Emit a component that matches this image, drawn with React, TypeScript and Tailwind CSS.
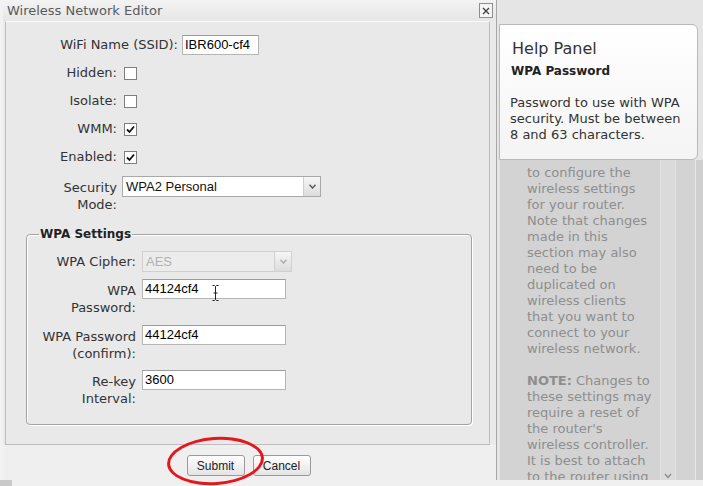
import React from 'react';

const labelFont = "font-['DejaVu_Sans',Verdana,sans-serif]";
const inputFont = "font-['Liberation_Sans',Arial,sans-serif]";

function Checkbox({ checked }: { checked?: boolean }) {
  return (
    <div className="w-[13px] h-[13px] border border-[#7f7f7f] bg-white flex items-center justify-center">
      {checked && (
        <svg width="9" height="9" viewBox="0 0 9 9">
          <path d="M1 4.5 L3.5 7 L8 1.5" fill="none" stroke="#111" strokeWidth="1.8" />
        </svg>
      )}
    </div>
  );
}

function SelectBox({ value, width, disabled }: { value: string; width: string; disabled?: boolean }) {
  return (
    <div
      className={`${width} h-[21px] flex border ${
        disabled ? 'border-[#d0d0d0] bg-[#ececec] text-[#b0b0b0]' : 'border-[#a9a9a9] bg-white text-[#111]'
      }`}
    >
      <div className={`flex-1 pl-[3px] text-[13px] leading-[19px] ${inputFont}`}>{value}</div>
      <div className="w-[17px] border-l border-[#cfcfcf] bg-gradient-to-b from-[#f6f6f6] to-[#dcdcdc] flex items-center justify-center">
        <svg width="7" height="5" viewBox="0 0 7 5">
          <path d="M0.5 0.8 L3.5 4 L6.5 0.8" fill="none" stroke={disabled ? '#aaa' : '#555'} strokeWidth="1.4" />
        </svg>
      </div>
    </div>
  );
}

function TextInput({ value, width, children }: { value: string; width: string; children?: React.ReactNode }) {
  return (
    <div
      className={`${width} h-[20px] relative border border-[#b5b5b5] border-t-[#9c9c9c] bg-white pl-[2px] text-[13px] leading-[18px] text-black ${inputFont}`}
    >
      {value}
      {children}
    </div>
  );
}

function Dialog() {
  return (
    <div className="w-[497px] h-[480px] flex flex-col bg-[#eaeaea] border-r border-[#a7a7a7] border-l-[3px] border-l-[#f2f2f2]">
      {/* title bar */}
      <div className="h-[21px] flex items-center justify-between pl-[4px] pr-[3px] bg-gradient-to-b from-[#f3f3f3] to-[#e6e6e6]">
        <span className={`text-[13px] text-[#5a5a5a] ${labelFont}`}>Wireless Network Editor</span>
        <div className="w-[14px] h-[15px] border border-[#8e8e8e] bg-[#f5f5f5] flex items-center justify-center">
          <svg width="8" height="8" viewBox="0 0 8 8">
            <path d="M1 1 L7 7 M7 1 L1 7" stroke="#444" strokeWidth="1.4" />
          </svg>
        </div>
      </div>

      {/* content panel */}
      <div
        className={`ml-[2px] mr-[6px] h-[424px] border border-[#bdbdbd] border-t-[#fafafa] bg-[#e9e9e9] pt-[9px] text-[13px] text-[#333] ${labelFont}`}
      >
        <div className="h-[28px] flex items-center">
          <div className="w-[172px] text-right">WiFi Name (SSID):</div>
          <div className="ml-[4px]">
            <TextInput value="IBR600-cf4" width="w-[77px]" />
          </div>
        </div>

        {[
          ['Hidden:', false],
          ['Isolate:', false],
          ['WMM:', true],
          ['Enabled:', true],
        ].map(([label, checked]) => (
          <div key={label as string} className="h-[28px] flex items-center">
            <div className="w-[111px] text-right">{label as string}</div>
            <div className="ml-[7px]">
              <Checkbox checked={checked as boolean} />
            </div>
          </div>
        ))}

        <div className="h-[42px] flex items-start pt-[5px]">
          <div className="w-[111px] text-right leading-[17px] pt-[3px]">
            Security
            <br />
            Mode:
          </div>
          <div className="ml-[5px]">
            <SelectBox value="WPA2 Personal" width="w-[199px]" />
          </div>
        </div>

        <fieldset className="ml-[20px] w-[446px] h-[198px] mt-[14px] border border-[#a3a3a3] rounded-[4px] shadow-[inset_1px_1px_0_#ffffff,1px_1px_0_#ffffff] pt-[9px]">
          <legend className="ml-[12px] px-[1px] font-bold text-[12px] leading-[15px] text-[#222]">WPA Settings</legend>

          <div className="h-[28px] flex items-start">
            <div className="w-[109px] text-right leading-[17px] pt-[2px]">WPA Cipher:</div>
            <div className="ml-[6px]">
              <SelectBox value="AES" width="w-[150px]" disabled />
            </div>
          </div>

          <div className="h-[46px] flex items-start">
            <div className="w-[109px] text-right leading-[17px] pt-[3px]">
              WPA
              <br />
              Password:
            </div>
            <div className="ml-[6px]">
              <TextInput value="44124cf4" width="w-[144px]">
                <svg className="absolute left-[69px] top-[5px]" width="7" height="16" viewBox="0 0 7 16">
                  <path d="M0.5 0.5 H2.5 L3.5 1.5 L4.5 0.5 H6.5 M3.5 1.5 V14.5 M0.5 15.5 H2.5 L3.5 14.5 L4.5 15.5 H6.5 M1.5 8 H5.5" fill="none" stroke="#222" strokeWidth="1" />
                </svg>
              </TextInput>
            </div>
          </div>

          <div className="h-[45px] flex items-start">
            <div className="w-[109px] text-right leading-[17px] pt-[3px]">
              WPA Password
              <br />
              (confirm):
            </div>
            <div className="ml-[6px]">
              <TextInput value="44124cf4" width="w-[144px]" />
            </div>
          </div>

          <div className="h-[44px] flex items-start">
            <div className="w-[109px] text-right leading-[17px] pt-[3px]">
              Re-key
              <br />
              Interval:
            </div>
            <div className="ml-[6px]">
              <TextInput value="3600" width="w-[144px]" />
            </div>
          </div>
        </fieldset>
      </div>

      {/* buttons */}
      <div className="relative flex-1 bg-[#efefef] flex justify-center gap-[8px] pt-[10px] pr-[2px]">
        {['Submit', 'Cancel'].map((b) => (
          <button
            key={b}
            className={`w-[58px] h-[21px] border border-[#9a9a9a] rounded-[3px] bg-gradient-to-b from-[#ffffff] to-[#e4e4e4] text-[12px] text-[#222] ${inputFont}`}
          >
            {b}
          </button>
        ))}
        <div className="absolute left-[164px] top-[-8px] w-[97px] h-[48px] rounded-[50%] border-[3px] border-[#e5171c] rotate-[-4deg]" />
      </div>
    </div>
  );
}

const helpLines = [
  'to configure the',
  'wireless settings',
  'for your router.',
  'Note that changes',
  'made in this',
  'section may also',
  'need to be',
  'duplicated on',
  'wireless clients',
  'that you want to',
  'connect to your',
  'wireless network.',
];

const noteLines = [
  'these settings may',
  'require a reset of',
  "the router's",
  'wireless controller.',
  'It is best to attach',
  'to the router using',
];

function HelpSide() {
  return (
    <div className={`flex-1 flex flex-col bg-[#e5e5e5] ${labelFont}`}>
      <div className="h-[24px]" />
      <div className="ml-[2px] w-[199px] h-[136px] border border-[#b9b9b9] rounded-tr-[6px] rounded-br-[6px] bg-gradient-to-b from-[#ffffff] to-[#f4f4f4] pl-[12px] pt-[13px] text-[#333]">
        <div className="text-[16px] leading-[22px]">Help Panel</div>
        <div className="mt-[3px] -ml-[1px] font-bold text-[12px] leading-[16px] text-[#222]">WPA Password</div>
        <div className="mt-[16px] -ml-[2px] text-[13px] leading-[16px]">
          Password to use with WPA
          <br />
          security. Must be between
          <br />
          8 and 63 characters.
        </div>
      </div>
      <div className="flex-1 flex overflow-hidden">
        <div className="ml-[3px] w-[195px] flex bg-[#d3d3d3]">
          <div className="flex-1 pl-[27px] pt-[5px] text-[13px] leading-[16px] text-[#8e8e8e] whitespace-nowrap">
            {helpLines.map((l) => (
              <div key={l}>{l}</div>
            ))}
            <div className="h-[16px]" />
            <div>
              <span className="font-bold">NOTE:</span> Changes to
            </div>
            {noteLines.map((l) => (
              <div key={l}>{l}</div>
            ))}
          </div>
          <div className="w-[16px] mr-[19px] border-x border-[#e4e4e4] bg-[#dadada] flex flex-col justify-end items-center pb-[1px]">
            <svg width="8" height="6" viewBox="0 0 8 6">
              <path d="M1 1 L4 4.5 L7 1" fill="none" stroke="#888" strokeWidth="1.2" />
            </svg>
          </div>
        </div>
        <div className="flex-1 border-l border-[#e6e6e6] bg-[#cfcfcf]" />
      </div>
    </div>
  );
}

export default function App() {
  return (
    <div className="w-[703px] h-[486px] overflow-hidden flex flex-col bg-[#f0f0f0]">
      <div className="flex h-[480px]">
        <Dialog />
        <HelpSide />
      </div>
      <div className="h-[6px] flex">
        <div className="w-[12px] bg-[#c9c9c9]" />
      </div>
    </div>
  );
}
